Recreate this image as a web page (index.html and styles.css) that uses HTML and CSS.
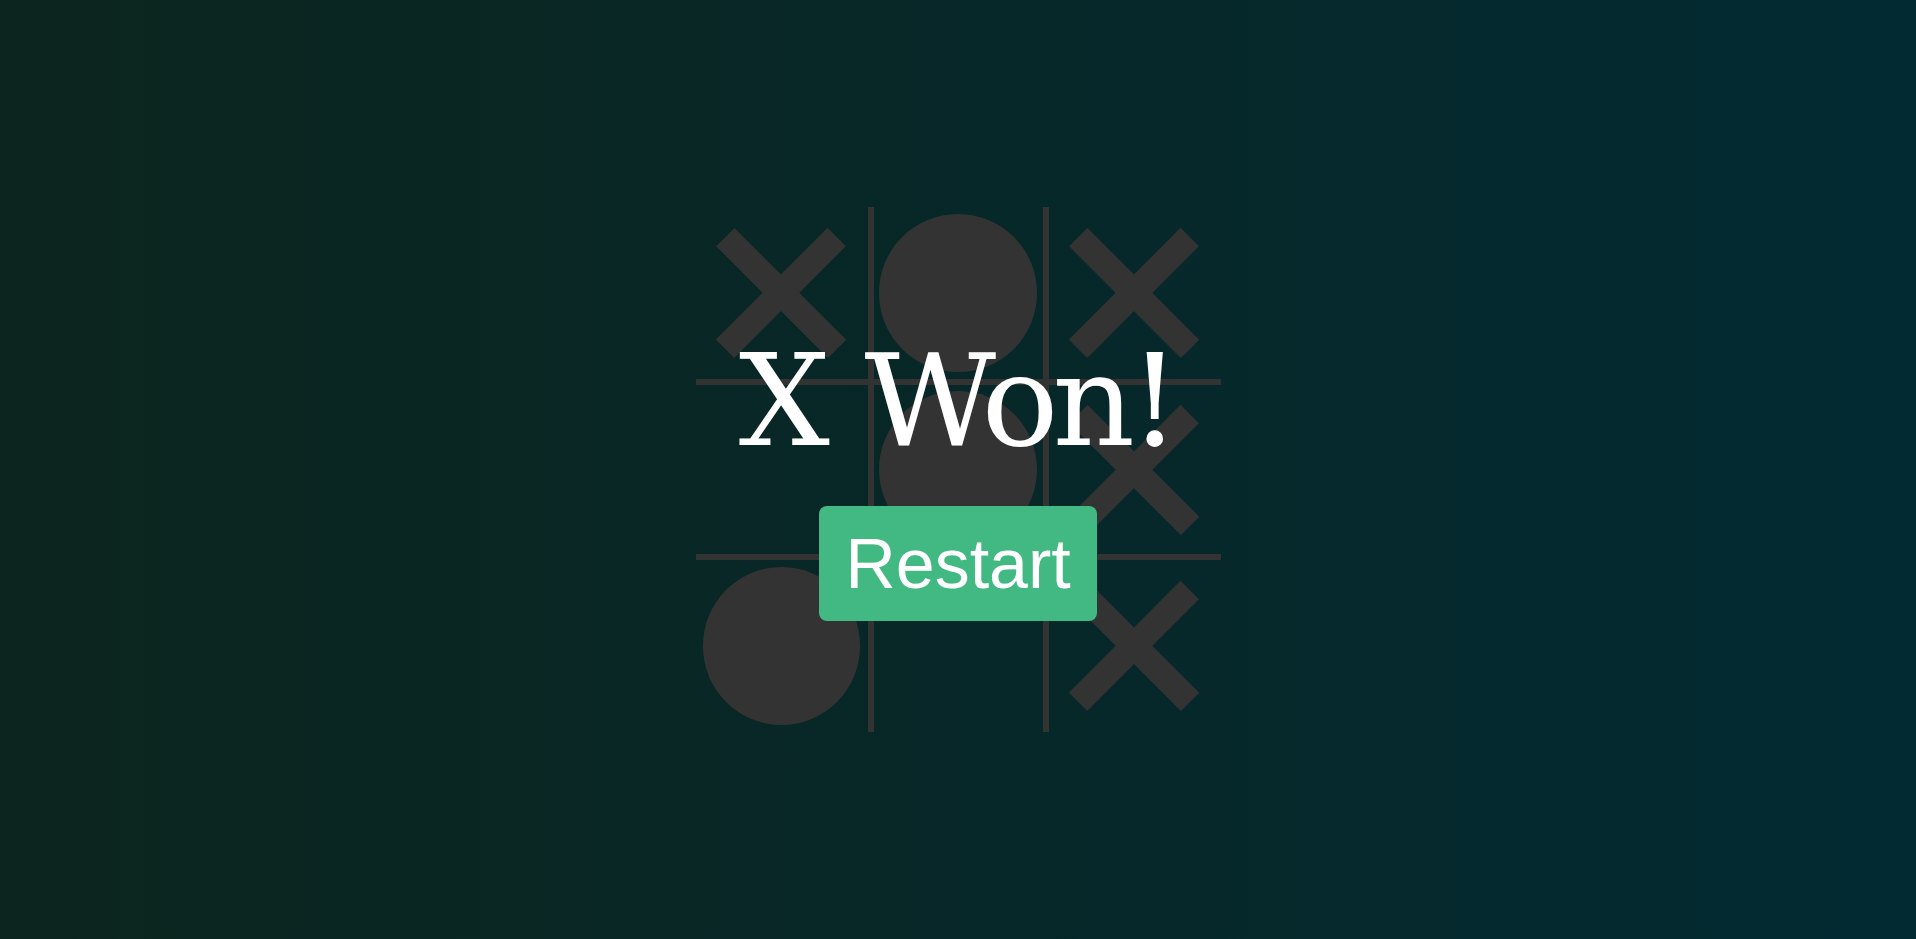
FILE: index.html
```html
<!DOCTYPE html>
<html lang="en">
<head>
<meta charset="utf-8">
<title>Tic Tac Toe</title>
<link rel="stylesheet" href="styles.css">
</head>
<body>
  <div class="board">
    <div class="cell x"></div>
    <div class="cell o"></div>
    <div class="cell x"></div>
    <div class="cell"></div>
    <div class="cell o"></div>
    <div class="cell x"></div>
    <div class="cell o"></div>
    <div class="cell"></div>
    <div class="cell x"></div>
  </div>
  <div class="winning-message">
    <div class="message-text">X Won!</div>
    <button class="restart-button">Restart</button>
  </div>
</body>
</html>
```
FILE: styles.css
```css
* {
  box-sizing: border-box;
}

html, body {
  margin: 0;
  height: 100%;
}

body {
  background: linear-gradient(to right, #0c251e, #022a32);
  display: grid;
  place-items: center;
  overflow: hidden;
}

.board {
  display: grid;
  grid-template-columns: repeat(3, 175px);
  grid-template-rows: repeat(3, 175px);
}

.cell {
  border: 3px solid #333;
  position: relative;
  display: flex;
  align-items: center;
  justify-content: center;
}

.cell:nth-child(-n+3) { border-top: none; }
.cell:nth-child(n+7) { border-bottom: none; }
.cell:nth-child(3n+1) { border-left: none; }
.cell:nth-child(3n) { border-right: none; }

.cell.x::before,
.cell.x::after {
  content: "";
  position: absolute;
  width: 26.25px;
  height: 157.5px;
  background: #333;
}

.cell.x::before { transform: rotate(45deg); }
.cell.x::after { transform: rotate(-45deg); }

.cell.o::before {
  content: "";
  width: 157.5px;
  height: 157.5px;
  border-radius: 50%;
  background: #333;
  flex: none;
}

.winning-message {
  position: fixed;
  inset: 0;
  display: flex;
  flex-direction: column;
  align-items: center;
  justify-content: center;
  padding-top: 8px;
}

.message-text {
  font-family: "DejaVu Serif", serif;
  font-size: 128px;
  letter-spacing: -6px;
  word-spacing: 6px;
  padding-right: 3px;
  color: #fff;
  line-height: 149px;
}

.restart-button {
  margin-top: 31px;
  width: 278px;
  height: 115px;
  padding: 0;
  font-family: "Liberation Sans", Arial, sans-serif;
  font-size: 70px;
  color: #fff;
  background: #42b983;
  border: none;
  border-radius: 8px;
  cursor: pointer;
}
```
